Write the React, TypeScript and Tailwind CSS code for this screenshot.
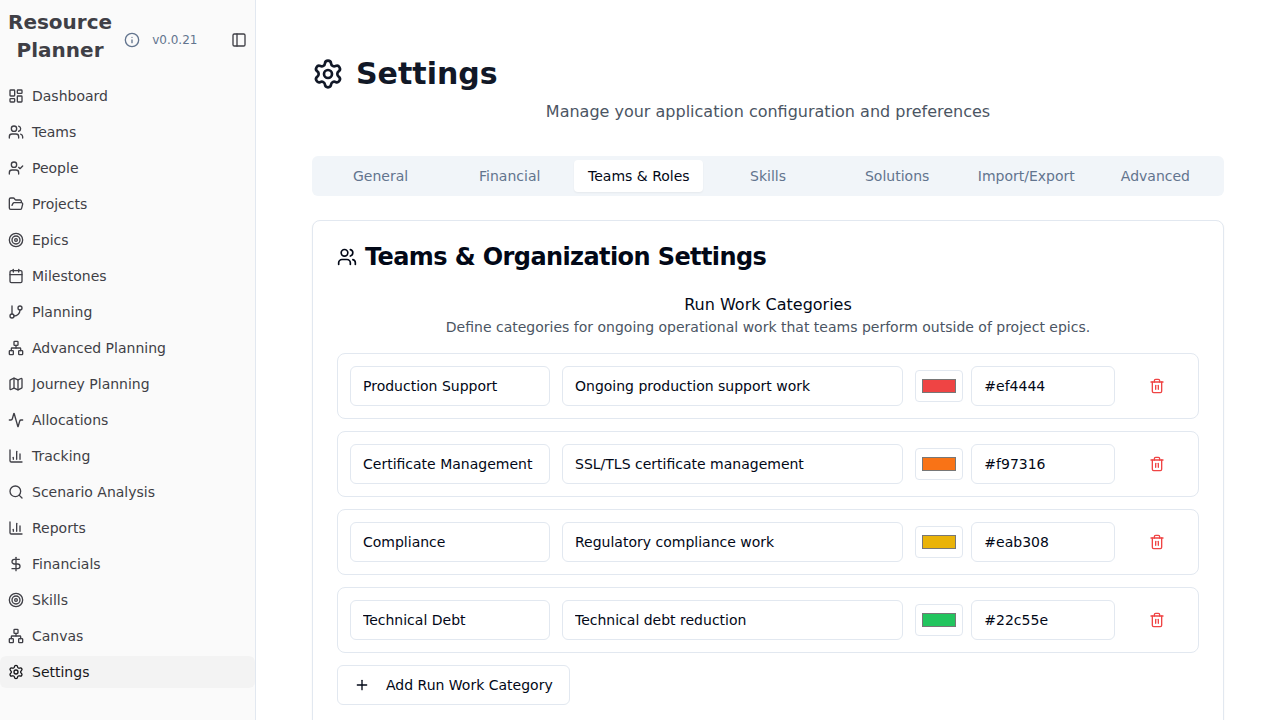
import { useState } from 'react';
import {
  Activity,
  Calendar,
  ChartColumn,
  DollarSign,
  FolderOpen,
  GitBranch,
  Info,
  LayoutDashboard,
  Map as MapIcon,
  Network,
  PanelLeft,
  Plus,
  Search,
  Settings,
  Target,
  Trash2,
  UserCheck,
  Users,
  type LucideIcon,
} from 'lucide-react';

interface NavItem {
  label: string;
  icon: LucideIcon;
}

interface Category {
  id: number;
  name: string;
  description: string;
  color: string;
}

const navItems: NavItem[] = [
  { label: 'Dashboard', icon: LayoutDashboard },
  { label: 'Teams', icon: Users },
  { label: 'People', icon: UserCheck },
  { label: 'Projects', icon: FolderOpen },
  { label: 'Epics', icon: Target },
  { label: 'Milestones', icon: Calendar },
  { label: 'Planning', icon: GitBranch },
  { label: 'Advanced Planning', icon: Network },
  { label: 'Journey Planning', icon: MapIcon },
  { label: 'Allocations', icon: Activity },
  { label: 'Tracking', icon: ChartColumn },
  { label: 'Scenario Analysis', icon: Search },
  { label: 'Reports', icon: ChartColumn },
  { label: 'Financials', icon: DollarSign },
  { label: 'Skills', icon: Target },
  { label: 'Canvas', icon: Network },
  { label: 'Settings', icon: Settings },
];

const tabs = ['General', 'Financial', 'Teams & Roles', 'Skills', 'Solutions', 'Import/Export', 'Advanced'];

const initialCategories: Category[] = [
  { id: 1, name: 'Production Support', description: 'Ongoing production support work', color: '#ef4444' },
  { id: 2, name: 'Certificate Management', description: 'SSL/TLS certificate management', color: '#f97316' },
  { id: 3, name: 'Compliance', description: 'Regulatory compliance work', color: '#eab308' },
  { id: 4, name: 'Technical Debt', description: 'Technical debt reduction', color: '#22c55e' },
];

const inputClass =
  'h-10 w-full min-w-0 rounded-md border border-slate-200 bg-white px-3 py-2 text-sm text-[#020817]';

function Sidebar() {
  return (
    <aside className="flex w-64 shrink-0 flex-col border-r border-slate-200 bg-[#fafafa] text-[#3f3f46]">
      <div className="flex items-center justify-between p-2">
        <div className="flex items-center gap-3">
          <h2 className="mb-2 w-min text-center text-xl font-bold">Resource Planner</h2>
          <Info className="size-4 text-slate-500" />
          <span className="text-xs text-slate-500">v0.0.21</span>
        </div>
        <button type="button" aria-label="Toggle sidebar">
          <PanelLeft className="size-4" />
        </button>
      </div>
      <nav>
        <ul className="flex flex-col gap-1">
          {navItems.map(({ label, icon: Icon }) => (
            <li key={label}>
              <a
                href="#"
                aria-current={label === 'Settings' ? 'page' : undefined}
                className={
                  label === 'Settings'
                    ? 'flex h-8 items-center gap-2 rounded-md bg-[#f3f3f3] p-2 text-sm text-[#18181b]'
                    : 'flex h-8 items-center gap-2 rounded-md p-2 text-sm'
                }
              >
                <Icon className="size-4 shrink-0" />
                <span>{label}</span>
              </a>
            </li>
          ))}
        </ul>
      </nav>
    </aside>
  );
}

interface CategoryRowProps {
  category: Category;
  onChange: (patch: Partial<Category>) => void;
  onDelete: () => void;
}

function CategoryRow({ category, onChange, onDelete }: CategoryRowProps) {
  return (
    <div className="grid grid-cols-12 items-center gap-3 rounded-lg border border-slate-200 p-3">
      <div className="col-span-3">
        <input
          className={inputClass}
          aria-label="Category name"
          value={category.name}
          onChange={(e) => onChange({ name: e.target.value })}
        />
      </div>
      <div className="col-span-5">
        <input
          className={inputClass}
          aria-label="Description"
          value={category.description}
          onChange={(e) => onChange({ description: e.target.value })}
        />
      </div>
      <div className="col-span-3 flex items-center gap-2">
        <input
          type="color"
          className="h-8 w-12 shrink-0 rounded border border-slate-200 p-1"
          aria-label="Color"
          value={category.color}
          onChange={(e) => onChange({ color: e.target.value })}
        />
        <input
          className={inputClass}
          aria-label="Color code"
          value={category.color}
          onChange={(e) => onChange({ color: e.target.value })}
        />
      </div>
      <button
        type="button"
        aria-label={`Delete ${category.name}`}
        onClick={onDelete}
        className="flex h-9 items-center justify-center rounded-md text-[#ef4444]"
      >
        <Trash2 className="size-4" />
      </button>
    </div>
  );
}

export default function App() {
  const [activeTab, setActiveTab] = useState('Teams & Roles');
  const [categories, setCategories] = useState(initialCategories);

  const update = (id: number, patch: Partial<Category>) =>
    setCategories((list) => list.map((c) => (c.id === id ? { ...c, ...patch } : c)));

  const add = () =>
    setCategories((list) => [...list, { id: Date.now(), name: '', description: '', color: '#3b82f6' }]);

  return (
    <div className="flex h-screen bg-white font-['DejaVu_Sans',sans-serif] text-[#020817]">
      <Sidebar />
      <main className="min-w-0 flex-1 overflow-y-auto p-14">
        <header className="mb-8">
          <h1 className="mb-2 flex items-center gap-3 text-3xl font-bold text-[#111827]">
            <Settings className="size-8" />
            Settings
          </h1>
          <p className="text-center text-[#4b5563]">Manage your application configuration and preferences</p>
        </header>

        <div role="tablist" className="mb-6 grid h-10 grid-cols-7 rounded-md bg-slate-100 p-1">
          {tabs.map((tab) => (
            <button
              key={tab}
              type="button"
              role="tab"
              aria-selected={tab === activeTab}
              onClick={() => setActiveTab(tab)}
              className={
                tab === activeTab
                  ? 'rounded-sm bg-white text-sm whitespace-nowrap text-[#020817] shadow-xs'
                  : 'rounded-sm text-sm whitespace-nowrap text-slate-500'
              }
            >
              {tab}
            </button>
          ))}
        </div>

        <section className="rounded-lg border border-slate-200 bg-white p-6 shadow-xs">
          <h2 className="mb-6 flex items-center gap-2 text-2xl leading-6 font-semibold tracking-tight">
            <Users className="size-5" />
            Teams & Organization Settings
          </h2>
          <div className="mb-4 text-center">
            <h3 className="text-base">Run Work Categories</h3>
            <p className="text-sm text-[#4b5563]">
              Define categories for ongoing operational work that teams perform outside of project epics.
            </p>
          </div>
          <div className="flex flex-col items-start gap-3">
            <div className="flex w-full flex-col gap-3">
              {categories.map((category) => (
                <CategoryRow
                  key={category.id}
                  category={category}
                  onChange={(patch) => update(category.id, patch)}
                  onDelete={() => setCategories((list) => list.filter((c) => c.id !== category.id))}
                />
              ))}
            </div>
            <button
              type="button"
              onClick={add}
              className="flex h-10 items-center gap-4 rounded-md border border-slate-200 bg-white px-4 text-sm"
            >
              <Plus className="size-4" />
              Add Run Work Category
            </button>
          </div>
        </section>
      </main>
    </div>
  );
}
